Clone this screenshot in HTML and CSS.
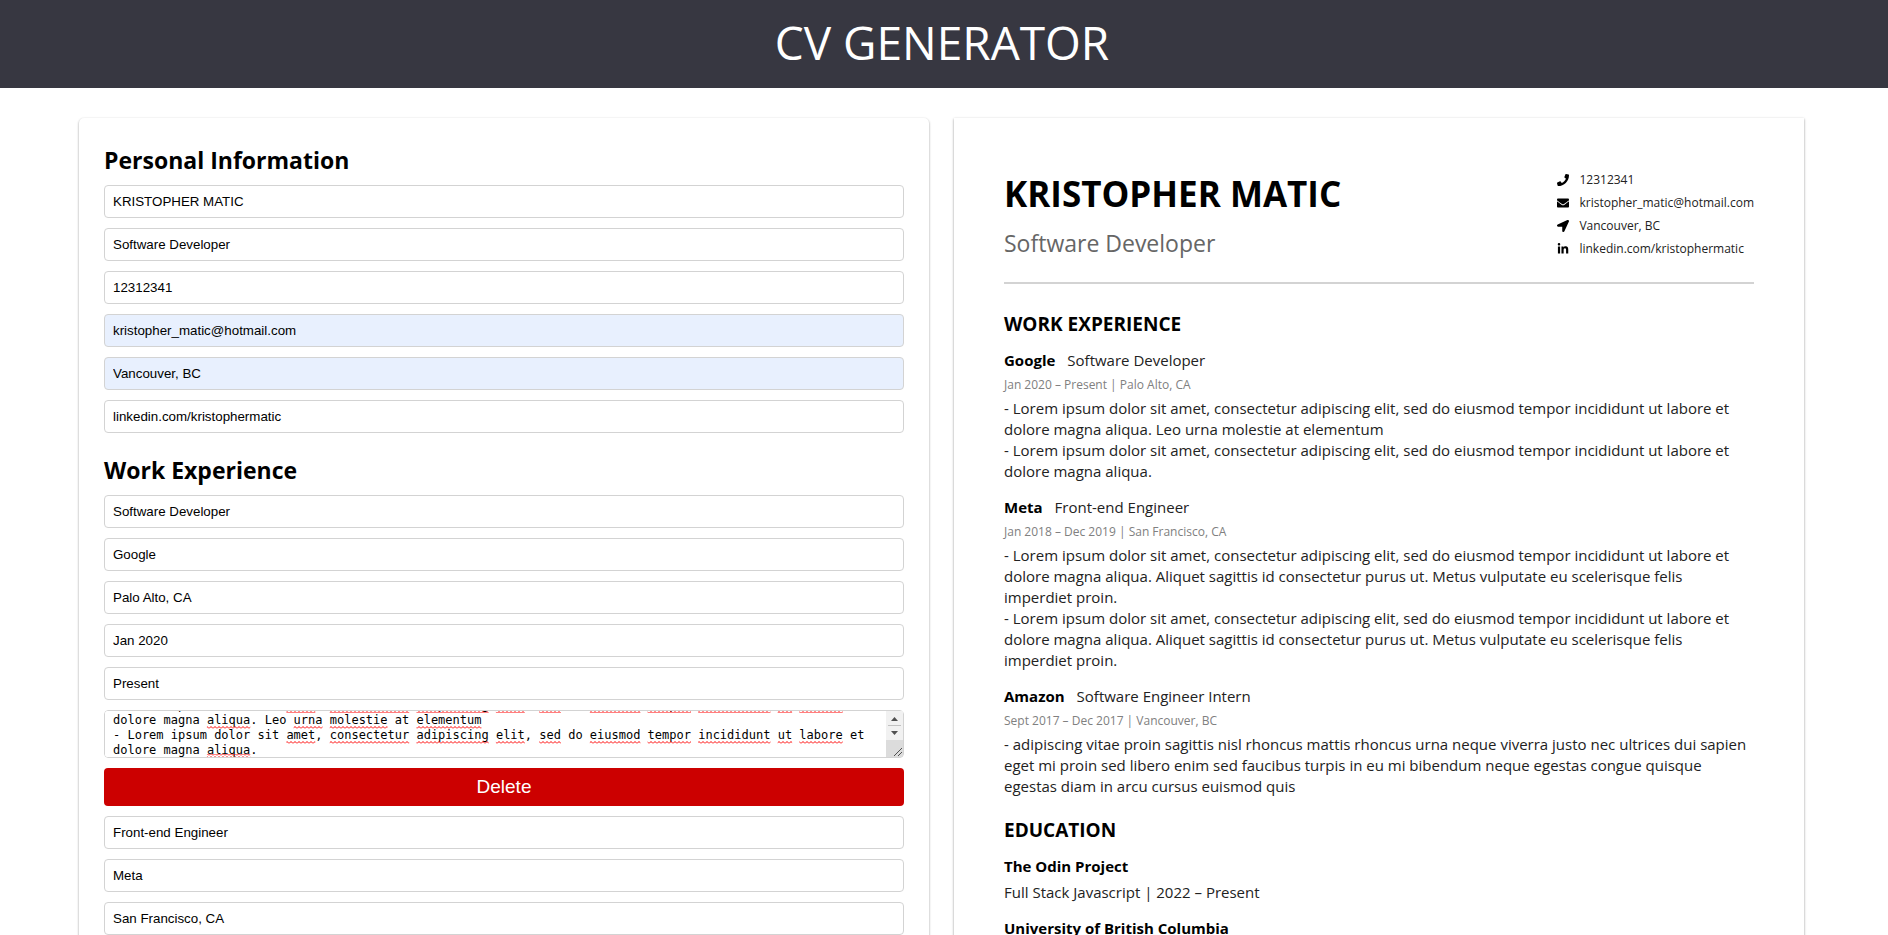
FILE: index.html
```html
<!DOCTYPE html>
<html lang="en">
<head>
<meta charset="utf-8">
<title>CV Generator</title>
<link rel="stylesheet" href="styles.css">
</head>
<body>
<header class="site-header"><h1 class="site-title">CV GENERATOR</h1></header>
<main class="layout">
  <form class="card form">
    <section class="form-section">
      <h2 class="form-heading">Personal Information</h2>
      <input class="field" type="text" aria-label="Full name" value="KRISTOPHER MATIC">
      <input class="field" type="text" aria-label="Title" value="Software Developer">
      <input class="field" type="text" aria-label="Phone" value="12312341">
      <input class="field autofilled" type="email" aria-label="Email" value="kristopher_matic@hotmail.com">
      <input class="field autofilled" type="text" aria-label="Location" value="Vancouver, BC">
      <input class="field" type="text" aria-label="LinkedIn" value="linkedin.com/kristophermatic">
    </section>
    <section class="form-section">
      <h2 class="form-heading">Work Experience</h2>
      <input class="field" type="text" aria-label="Position" value="Software Developer">
      <input class="field" type="text" aria-label="Company" value="Google">
      <input class="field" type="text" aria-label="City" value="Palo Alto, CA">
      <input class="field" type="text" aria-label="From" value="Jan 2020">
      <input class="field" type="text" aria-label="To" value="Present">
      <div class="description">
        <textarea class="field description-input" aria-label="Description" spellcheck="false">- Lorem ipsum dolor sit amet, consectetur adipiscing elit, sed do eiusmod tempor incididunt ut labore et dolore magna aliqua. Leo urna molestie at elementum
- Lorem ipsum dolor sit amet, consectetur adipiscing elit, sed do eiusmod tempor incididunt ut labore et dolore magna aliqua.</textarea>
        <svg class="spelling" aria-hidden="true">
          <defs>
            <pattern id="wave" width="4" height="3" patternUnits="userSpaceOnUse">
              <path d="M0 2.5 L2 .5 L4 2.5" fill="none" stroke="#f00" stroke-width="1"/>
            </pattern>
          </defs>
          <g fill="url(#wave)">
            <rect x="24ch" y="0" width="4ch" height="2"/><rect x="30ch" y="0" width="11ch" height="2"/><rect x="42ch" y="0" width="10ch" height="2"/><rect x="53ch" y="0" width="4ch" height="2"/><rect x="59ch" y="0" width="3ch" height="2"/><rect x="66ch" y="0" width="7ch" height="2"/><rect x="74ch" y="0" width="6ch" height="2"/><rect x="81ch" y="0" width="10ch" height="2"/><rect x="92ch" y="0" width="2ch" height="2"/><rect x="95ch" y="0" width="6ch" height="2"/>
            <rect x="13ch" y="15" width="6ch" height="3"/><rect x="25ch" y="15" width="4ch" height="3"/><rect x="30ch" y="15" width="8ch" height="3"/><rect x="42ch" y="15" width="9ch" height="3"/>
            <rect x="24ch" y="30" width="4ch" height="3"/><rect x="30ch" y="30" width="11ch" height="3"/><rect x="42ch" y="30" width="10ch" height="3"/><rect x="53ch" y="30" width="4ch" height="3"/><rect x="59ch" y="30" width="3ch" height="3"/><rect x="66ch" y="30" width="7ch" height="3"/><rect x="74ch" y="30" width="6ch" height="3"/><rect x="81ch" y="30" width="10ch" height="3"/><rect x="92ch" y="30" width="2ch" height="3"/><rect x="95ch" y="30" width="6ch" height="3"/>
            <rect x="13ch" y="43" width="6ch" height="3"/>
          </g>
        </svg>
        <svg class="scroller" viewBox="0 0 17 46" aria-hidden="true">
          <path d="M0 0h17v46H0z" fill="#f1f1f1"/>
          <path d="M0 29h17v17H0z" fill="#dcdcdc"/>
          <path d="M2 14.500h13" stroke="#c1c1c1"/>
          <path d="M5 10h7L8.500 6zM5 20h7L8.500 24z" fill="#505050"/>
          <path d="M8 45l8-8M12 45l4-4" stroke="#505050"/>
        </svg>
      </div>
      <button class="delete" type="button">Delete</button>
      <input class="field" type="text" aria-label="Position" value="Front-end Engineer">
      <input class="field" type="text" aria-label="Company" value="Meta">
      <input class="field" type="text" aria-label="City" value="San Francisco, CA">
    </section>
  </form>
  <article class="card preview">
    <header class="preview-header">
      <div>
        <h2 class="name">KRISTOPHER MATIC</h2>
        <p class="role">Software Developer</p>
      </div>
      <ul class="contacts">
        <li class="contact"><svg class="icon" viewBox="0 0 512 512" aria-hidden="true"><path d="M493.400 24.600l-104-24c-11.300-2.600-22.900 3.300-27.500 13.900l-48 112c-4.200 9.800-1.400 21.300 6.900 28l60.600 49.600c-36 76.700-98.900 140.500-177.200 177.200l-49.600-60.600c-6.800-8.300-18.200-11.100-28-6.900l-112 48C3.900 366.500-2 378.100.6 389.400l24 104C27.100 504.200 36.700 512 48 512c256.100 0 464-207.500 464-464 0-11.200-7.700-20.900-18.600-23.400z"/></svg>12312341</li>
        <li class="contact"><svg class="icon" viewBox="0 0 512 512" aria-hidden="true"><path d="M502.300 190.800c3.900-3.100 9.700-.2 9.700 4.700V400c0 26.500-21.500 48-48 48H48c-26.500 0-48-21.500-48-48V195.600c0-5 5.700-7.800 9.700-4.700 22.400 17.400 52.100 39.500 154.100 113.600 21.100 15.400 56.700 47.800 92.200 47.600 35.700.3 72-32.800 92.300-47.600 102-74.100 131.600-96.300 154-113.700zM256 320c23.200.4 56.600-29.200 73.400-41.400 132.700-96.300 142.800-104.700 173.400-128.700 5.800-4.500 9.200-11.500 9.200-18.900v-19c0-26.500-21.500-48-48-48H48c-26.500 0-48 21.500-48 48v19c0 7.400 3.400 14.300 9.200 18.900 30.600 23.900 40.700 32.400 173.400 128.700 16.800 12.200 50.200 41.800 73.400 41.400z"/></svg>kristopher_matic@hotmail.com</li>
        <li class="contact"><svg class="icon" viewBox="0 0 512 512" aria-hidden="true"><path d="M444.520 3.520L28.740 195.420c-47.970 22.390-31.980 92.750 19.190 92.750h175.910v175.910c0 51.170 70.360 67.170 92.750 19.190l191.900-415.780c15.990-38.390-25.590-79.970-63.970-63.970z"/></svg>Vancouver, BC</li>
        <li class="contact"><svg class="icon" viewBox="0 0 448 512" aria-hidden="true"><path d="M100.280 448H7.400V148.900h92.880zM53.790 108.100C24.090 108.100 0 83.500 0 53.800a53.790 53.790 0 0 1 107.580 0c0 29.700-24.100 54.300-53.790 54.300zM447.900 448h-92.680V302.400c0-34.700-.7-79.200-48.290-79.200-48.290 0-55.690 37.700-55.690 76.700V448h-92.780V148.900h89.080v40.800h1.300c12.400-23.500 42.690-48.300 87.880-48.300 94 0 111.280 61.900 111.280 142.300V448z"/></svg>linkedin.com/kristophermatic</li>
      </ul>
    </header>
    <section class="cv-section">
      <h3 class="cv-heading">WORK EXPERIENCE</h3>
      <div class="job">
        <div class="job-title"><strong>Google</strong><span>Software Developer</span></div>
        <p class="job-meta">Jan 2020 – Present | Palo Alto, CA</p>
        <p class="job-text">- Lorem ipsum dolor sit amet, consectetur adipiscing elit, sed do eiusmod tempor incididunt ut labore et dolore magna aliqua. Leo urna molestie at elementum
- Lorem ipsum dolor sit amet, consectetur adipiscing elit, sed do eiusmod tempor incididunt ut labore et dolore magna aliqua.</p>
      </div>
      <div class="job">
        <div class="job-title"><strong>Meta</strong><span>Front-end Engineer</span></div>
        <p class="job-meta">Jan 2018 – Dec 2019 | San Francisco, CA</p>
        <p class="job-text">- Lorem ipsum dolor sit amet, consectetur adipiscing elit, sed do eiusmod tempor incididunt ut labore et dolore magna aliqua. Aliquet sagittis id consectetur purus ut. Metus vulputate eu scelerisque felis imperdiet proin.
- Lorem ipsum dolor sit amet, consectetur adipiscing elit, sed do eiusmod tempor incididunt ut labore et dolore magna aliqua. Aliquet sagittis id consectetur purus ut. Metus vulputate eu scelerisque felis imperdiet proin.</p>
      </div>
      <div class="job">
        <div class="job-title"><strong>Amazon</strong><span>Software Engineer Intern</span></div>
        <p class="job-meta">Sept 2017 – Dec 2017 | Vancouver, BC</p>
        <p class="job-text">- adipiscing vitae proin sagittis nisl rhoncus mattis rhoncus urna neque viverra justo nec ultrices dui sapien eget mi proin sed libero enim sed faucibus turpis in eu mi bibendum neque egestas congue quisque egestas diam in arcu cursus euismod quis</p>
      </div>
    </section>
    <section class="cv-section">
      <h3 class="cv-heading">EDUCATION</h3>
      <div class="school">
        <strong>The Odin Project</strong>
        <span>Full Stack Javascript | 2022 – Present</span>
      </div>
      <div class="school">
        <strong>University of British Columbia</strong>
      </div>
    </section>
  </article>
</main>
<script src="script.js"></script>
</body>
</html>
```
FILE: styles.css
```css
* { box-sizing: border-box; }
body {
  margin: 0;
  background: #fff;
  color: #000;
  font-family: "Segoe UI", "Open Sans", sans-serif;
}
h1, h2, h3, p, ul { margin: 0; padding: 0; }

.site-header {
  padding: 10px 4px 14px 0;
  background: #373741;
  color: #fff;
  text-align: center;
}
.site-title { font-size: 46px; line-height: 64px; font-weight: 400; }

.layout {
  display: grid;
  grid-template-columns: 1fr 1fr;
  gap: 25px;
  padding: 30px 84px 0 79px;
}
.card { box-shadow: 0 1px 3px rgba(0, 0, 0, .2), 0 1px 2px rgba(0, 0, 0, .24); }
.form {
  display: flex;
  flex-direction: column;
  gap: 20px;
  padding: 25px;
  border-radius: 5px;
}
.form-section { display: flex; flex-direction: column; gap: 10px; }
.form-heading { padding-top: 2px; font-size: 23px; line-height: 30px; font-weight: 700; }
.field {
  width: 100%;
  padding: 8px;
  border: 1px solid #d3d3d3;
  border-radius: 4px;
  background: #fff;
  color: #000;
  font-family: Arial, "Liberation Sans", sans-serif;
}
.autofilled { background: #e8f0fe; }

.description { position: relative; display: flex; overflow: hidden; border-radius: 4px; }
.description-input {
  height: 48px;
  padding-right: 25px;
  resize: vertical;
  overflow-y: scroll;
  font: 12px/15px "DejaVu Sans Mono", monospace;
}
.spelling {
  position: absolute;
  top: 1px;
  left: 9px;
  width: calc(100% - 27px);
  height: 46px;
  font: 12px/15px "DejaVu Sans Mono", monospace;
  pointer-events: none;
}
.scroller {
  position: absolute;
  top: 1px;
  right: 1px;
  width: 17px;
  height: 46px;
  pointer-events: none;
}

.delete {
  height: 38px;
  border: 0;
  border-radius: 4px;
  background: #c00;
  color: #fff;
  font: 19px Arial, "Liberation Sans", sans-serif;
}

.preview { padding: 50px; }
.preview-header {
  display: flex;
  justify-content: space-between;
  padding-bottom: 22px;
  border-bottom: 2px solid #d3d3d3;
}
.name { font-size: 35px; line-height: 52px; font-weight: 700; }
.role { margin-top: 6px; color: #666; font-size: 23px; line-height: 34px; }
.contacts { list-style: none; }
.contact {
  display: flex;
  align-items: center;
  gap: 10px;
  color: #222;
  font-size: 12px;
  line-height: 23px;
}
.icon { width: 12px; height: 12px; fill: #000; }

.cv-section { padding-top: 29px; }
.cv-section + .cv-section { padding-top: 22px; }
.cv-heading { font-size: 19px; line-height: 22px; font-weight: 700; }
.job { padding-top: 15px; font-size: 15px; line-height: 21px; }
.job-title { display: flex; gap: 12px; }
.job-title span, .job-text, .school span { color: #222; }
.job-meta { padding: 3px 0; color: #808080; font-size: 12px; line-height: 21px; }
.job-text { white-space: pre-line; }
.school {
  display: flex;
  flex-direction: column;
  gap: 5px;
  padding-top: 15px;
  font-size: 15px;
  line-height: 21px;
}
```
FILE: script.js
```js
document.querySelector(".description-input").scrollTop = 21;
```
